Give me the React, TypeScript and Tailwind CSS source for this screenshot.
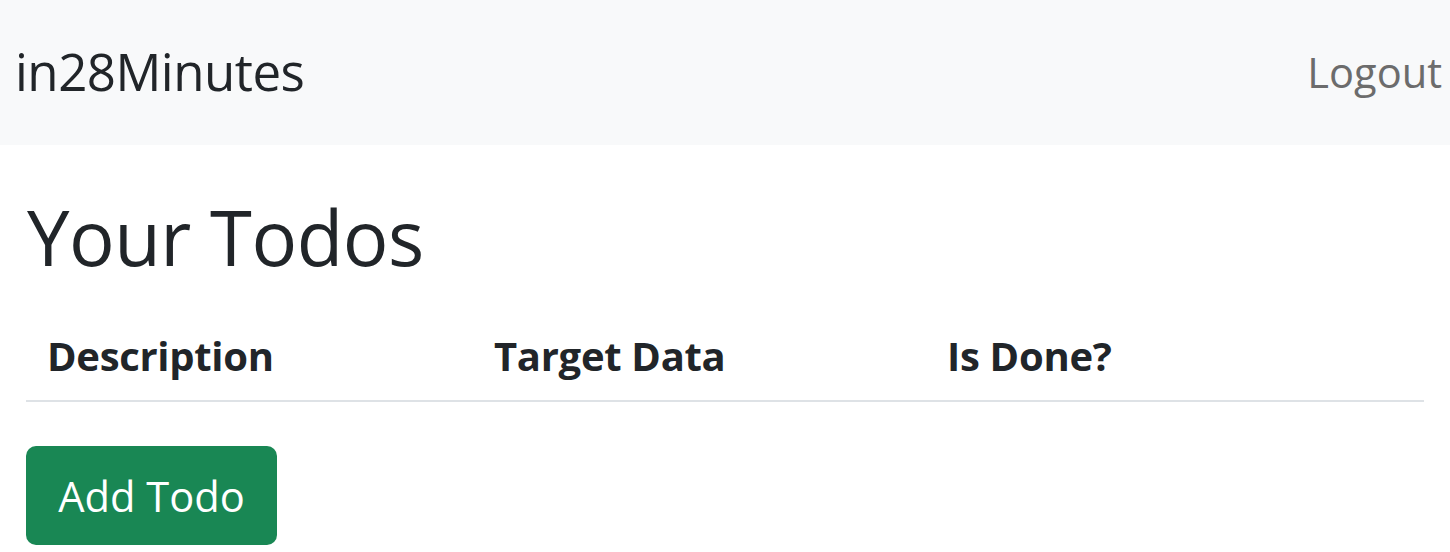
export default function App() {
  const font = { fontFamily: '"Open Sans", "Noto Sans", sans-serif' };
  return (
    <div className="w-[1450px] h-[552px] bg-white text-[#212529] overflow-hidden" style={font}>
      <nav className="h-[145px] bg-[#f8f9fa] flex items-center justify-between pl-[15px] pr-[8px]">
        <a className="text-[51px] leading-none text-[#212529] tracking-[-0.5px] -mt-[3px]">in28Minutes</a>
        <a className="text-[41.6px] leading-none text-[#6c6c6c]">Logout</a>
      </nav>
      <div className="px-[26px]">
        <h1 className="text-[76px] leading-none font-normal pt-[54px] pl-[1px] tracking-[-0.5px]">Your Todos</h1>
        <div className="mt-[61px] flex border-b-2 border-[#dee2e6] pb-[24px] font-bold text-[40px] leading-none tracking-[-0.3px]">
          <div className="w-[447px] pl-[21px]">Description</div>
          <div className="w-[453px] pl-[21px]">Target Data</div>
          <div className="flex-1 pl-[21px]">Is Done?</div>
        </div>
        <button className="mt-[44px] w-[251px] h-[99px] pt-[3px] bg-[#198754] text-white rounded-[10px] text-[41.6px] leading-none">
          Add Todo
        </button>
      </div>
    </div>
  );
}
